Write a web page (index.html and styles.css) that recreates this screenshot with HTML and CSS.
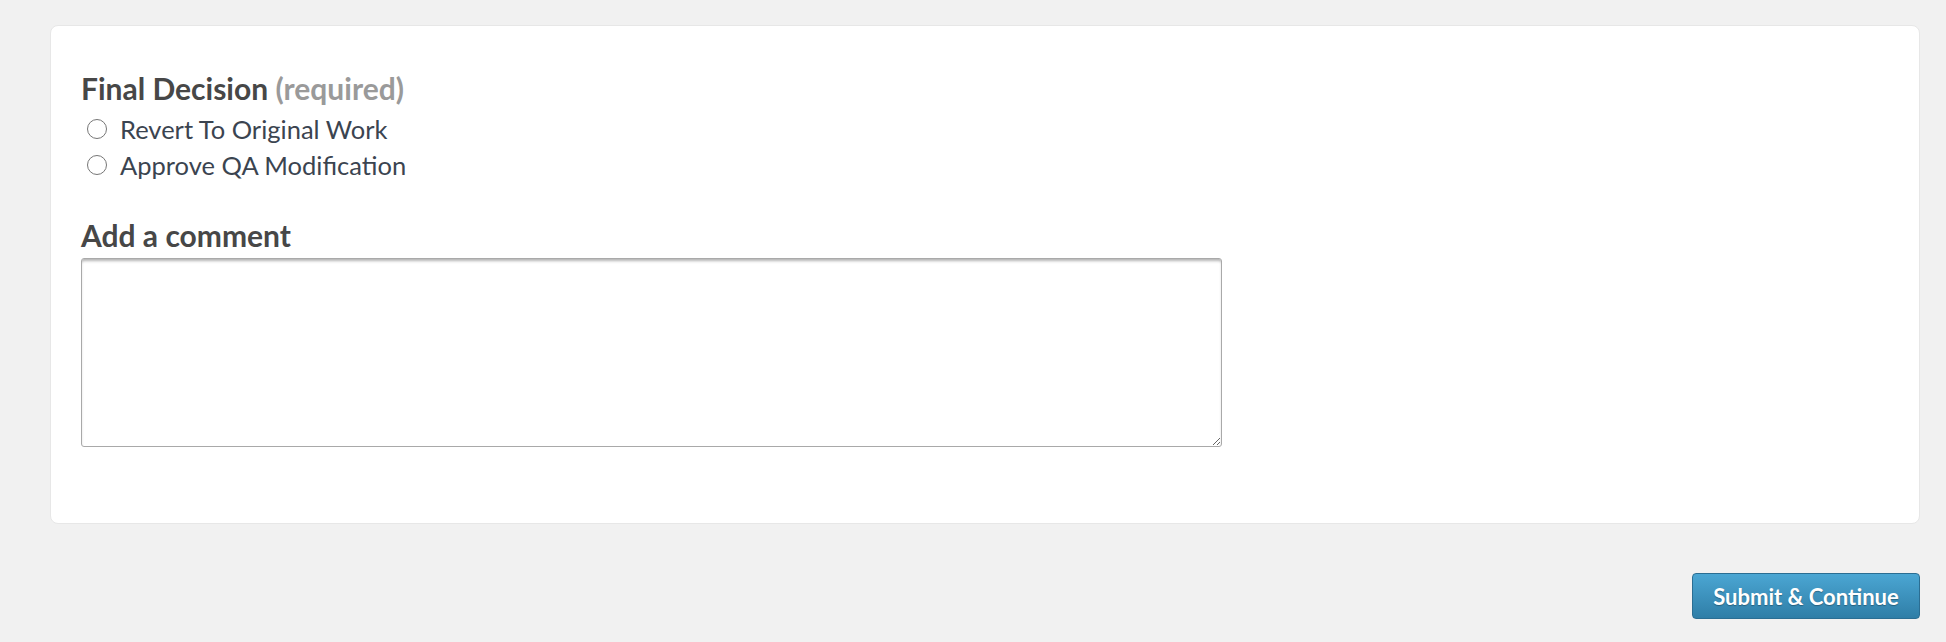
FILE: index.html
```html
<!DOCTYPE html>
<html lang="en">
<head>
    <meta charset="UTF-8">
    <meta name="viewport" content="width=device-width, initial-scale=1.0">
    <title>QA Review</title>
    <link rel="stylesheet" href="styles.css">
</head>
<body>
    <form id="reviewForm">
        <div class="panel">
            <h3>Final Decision <span class="hint">(required)</span></h3>
            <div class="choices">
                <label class="choice">
                    <input type="radio" name="decision" value="revert">
                    <span>Revert To Original Work</span>
                </label>
                <label class="choice">
                    <input type="radio" name="decision" value="approve">
                    <span>Approve QA Modification</span>
                </label>
            </div>
            <h3 class="comment-title">Add a comment</h3>
            <textarea id="comment" name="comment"></textarea>
        </div>
        <div class="actions">
            <button type="submit">Submit &amp; Continue</button>
        </div>
    </form>
</body>
</html>
```

FILE: styles.css
```css
body {
    font-family: Lato, "Open Sans", Arial, sans-serif;
    margin: 0;
    padding: 25px 26px 0 50px;
    background-color: #f1f1f1;
    color: #3b4450;
}

.panel {
    background-color: #fff;
    border: 1px solid #e7e7e7;
    border-radius: 8px;
    padding: 44px 30px 76px 30px;
}

h3 {
    font-size: 30px;
    font-weight: 700;
    line-height: 36px;
    color: #474747;
    margin: 0;
}

.hint {
    color: #9a9a9a;
}

.choices {
    display: flex;
    flex-direction: column;
    margin-top: 5px;
}

.choice {
    display: flex;
    align-items: center;
    gap: 13px;
    font-size: 25.5px;
    line-height: 36px;
    padding-left: 6px;
    cursor: pointer;
}

.choice input[type="radio"] {
    appearance: none;
    width: 20px;
    height: 20px;
    margin: 0;
    border: 1.5px solid #767676;
    border-radius: 50%;
    background-color: #fff;
    box-sizing: border-box;
}

.choice input[type="radio"]:checked {
    border-color: #2e7ea8;
    box-shadow: inset 0 0 0 4px #fff;
    background-color: #2e7ea8;
}

.comment-title {
    margin-top: 34px;
}

textarea {
    display: block;
    width: 1141px;
    height: 189px;
    margin-top: 5px;
    box-sizing: border-box;
    border: 1px solid #a9a9a9;
    border-radius: 3px;
    box-shadow: inset 0 3px 3px -1px rgba(0, 0, 0, 0.3);
    font-family: inherit;
    font-size: 18px;
    padding: 8px;
}

.actions {
    display: flex;
    justify-content: flex-end;
    margin-top: 49px;
}

button {
    font-family: inherit;
    font-size: 22px;
    font-weight: 700;
    color: #fff;
    text-shadow: 0 1px 1px rgba(0, 0, 0, 0.3);
    width: 228px;
    height: 46px;
    border: 1px solid #2b6e93;
    border-radius: 4px;
    background: linear-gradient(#4ba6d3, #2f7ea7);
    cursor: pointer;
}

button:hover {
    background: linear-gradient(#3f97c4, #286f95);
}
```
